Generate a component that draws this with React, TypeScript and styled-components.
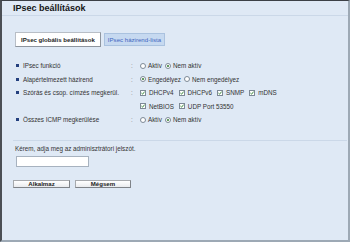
import React from "react";
import styled, { createGlobalStyle } from "styled-components";

const Global = createGlobalStyle`
  html, body { margin: 0; padding: 0; background: #dfe9f5; }
  * { box-sizing: border-box; }
`;

const Frame = styled.div`
  width: 350px;
  height: 242px;
  border-left: 2px solid #4b4f55;
  border-top: 1px solid #3c4046;
  border-right: 2px solid #9da9b5;
  border-bottom: 2px solid #9da9b5;
  background: #dfe9f5;
  font-family: "Liberation Sans", Arial, sans-serif;
  color: #333;
  display: flex;
  flex-direction: column;
  overflow: hidden;
`;

const Title = styled.h1`
  margin: 0;
  height: 15px;
  padding-left: 11px;
  font-size: 9px;
  line-height: 14px;
  font-weight: bold;
  color: #151515;
  border-bottom: 1px solid #cbd8e8;
`;

const Tabs = styled.div`
  display: flex;
  align-items: center;
  gap: 3px;
  margin-top: 16px;
  padding-left: 13px;
`;

const Tab = styled.div<{ $active?: boolean }>`
  height: ${(p) => (p.$active ? "15px" : "13px")};
  padding: ${(p) => (p.$active ? "0 5px" : "0 3px")};
  display: flex;
  align-items: center;
  font-size: 6.1px;
  font-weight: ${(p) => (p.$active ? "bold" : "normal")};
  color: ${(p) => (p.$active ? "#222" : "#3f66c0")};
  background: ${(p) => (p.$active ? "#ffffff" : "#c6d9f0")};
  border: 1px solid ${(p) => (p.$active ? "#b8bec6" : "#aac2df")};
  border-right-color: ${(p) => (p.$active ? "#8e959e" : "#aac2df")};
  border-bottom-color: ${(p) => (p.$active ? "#8e959e" : "#aac2df")};
`;

const Form = styled.div`
  margin-top: 12px;
  padding-left: 14px;
  display: flex;
  flex-direction: column;
`;

const Row = styled.div`
  display: grid;
  grid-template-columns: 115px 9px 1fr;
  align-items: start;
`;

const Label = styled.div`
  height: 13.5px;
  display: flex;
  align-items: center;
  gap: 4px;
  font-size: 6.3px;
  color: #333;
`;

const Bullet = styled.span`
  width: 3px;
  height: 3px;
  background: #24407e;
  flex: none;
`;

const Colon = styled.div`
  height: 13.5px;
  display: flex;
  align-items: center;
  font-size: 6.3px;
  color: #888;
`;

const Lines = styled.div`
  display: flex;
  flex-direction: column;
`;

const Line = styled.div`
  height: 13.5px;
  display: flex;
  align-items: center;
`;

const Option = styled.label<{ $wide?: boolean }>`
  display: flex;
  align-items: center;
  gap: ${(p) => (p.$wide ? "3px" : "2px")};
  margin-right: ${(p) => (p.$wide ? "5px" : "3px")};
  font-size: 6.3px;
  color: #333;
`;

const RadioMark = styled.span<{ $on?: boolean }>`
  width: 6px;
  height: 6px;
  border-radius: 50%;
  border: 1px solid #7d8996;
  background: #fff;
  display: flex;
  align-items: center;
  justify-content: center;
  flex: none;
  &::after {
    content: "";
    width: 2px;
    height: 2px;
    border-radius: 50%;
    background: ${(p) => (p.$on ? "#2f7a2f" : "transparent")};
  }
`;

const CheckBox = styled.span`
  width: 6px;
  height: 6px;
  border: 1px solid #7d8996;
  background: #fff;
  display: flex;
  align-items: center;
  justify-content: center;
  flex: none;
`;

const Footer = styled.div`
  margin: 13px 1px 0 11px;
  border-top: 1px solid #cbd8e8;
  display: flex;
  flex-direction: column;
  align-items: flex-start;
`;

const Prompt = styled.div`
  margin: 4px 0 0 2px;
  font-size: 6.3px;
  line-height: 8px;
  color: #333;
`;

const Input = styled.input`
  margin: 3px 0 0 3px;
  width: 73px;
  height: 11px;
  padding: 0;
  border: 1px solid #a7b2bf;
  background: #fff;
  outline: none;
`;

const Buttons = styled.div`
  display: flex;
  gap: 5px;
  margin-top: 13px;
`;

const Button = styled.button<{ $w: number }>`
  width: ${(p) => p.$w}px;
  height: 8px;
  padding: 0;
  border: 1px solid #a6a9ad;
  border-right-color: #7f8388;
  border-bottom-color: #7f8388;
  background: linear-gradient(#ffffff, #e9ebee);
  font-family: "Liberation Sans", Arial, sans-serif;
  font-size: 6.1px;
  font-weight: bold;
  color: #222;
  line-height: 6px;
`;

const Radio = ({ on, children }: { on?: boolean; children: React.ReactNode }) => (
  <Option>
    <RadioMark $on={on} />
    {children}
  </Option>
);

const Check = ({ children }: { children: React.ReactNode }) => (
  <Option $wide>
    <CheckBox>
      <svg width="4" height="4" viewBox="0 0 4 4">
        <path d="M0.4 2 L1.6 3.2 L3.6 0.6" fill="none" stroke="#2d7f2d" strokeWidth="0.9" />
      </svg>
    </CheckBox>
    {children}
  </Option>
);

const Field = ({ label, children }: { label: string; children: React.ReactNode }) => (
  <Row>
    <Label>
      <Bullet />
      {label}
    </Label>
    <Colon>:</Colon>
    <Lines>{children}</Lines>
  </Row>
);

export default function App() {
  return (
    <>
      <Global />
      <Frame>
        <Title>IPsec beállítások</Title>
        <Tabs>
          <Tab $active>IPsec globális beállítások</Tab>
          <Tab>IPsec házirend-lista</Tab>
        </Tabs>
        <Form>
          <Field label="IPsec funkció">
            <Line>
              <Radio>Aktív</Radio>
              <Radio on>Nem aktív</Radio>
            </Line>
          </Field>
          <Field label="Alapértelmezett házirend">
            <Line>
              <Radio on>Engedélyez</Radio>
              <Radio>Nem engedélyez</Radio>
            </Line>
          </Field>
          <Field label="Szórás és csop. címzés megkerül.">
            <Line>
              <Check>DHCPv4</Check>
              <Check>DHCPv6</Check>
              <Check>SNMP</Check>
              <Check>mDNS</Check>
            </Line>
            <Line>
              <Check>NetBIOS</Check>
              <Check>UDP Port 53550</Check>
            </Line>
          </Field>
          <Field label="Összes ICMP megkerülése">
            <Line>
              <Radio>Aktív</Radio>
              <Radio on>Nem aktív</Radio>
            </Line>
          </Field>
        </Form>
        <Footer>
          <Prompt>Kérem, adja meg az adminisztrátori jelszót.</Prompt>
          <Input type="password" />
          <Buttons>
            <Button $w={57}>Alkalmaz</Button>
            <Button $w={56}>Mégsem</Button>
          </Buttons>
        </Footer>
      </Frame>
    </>
  );
}
